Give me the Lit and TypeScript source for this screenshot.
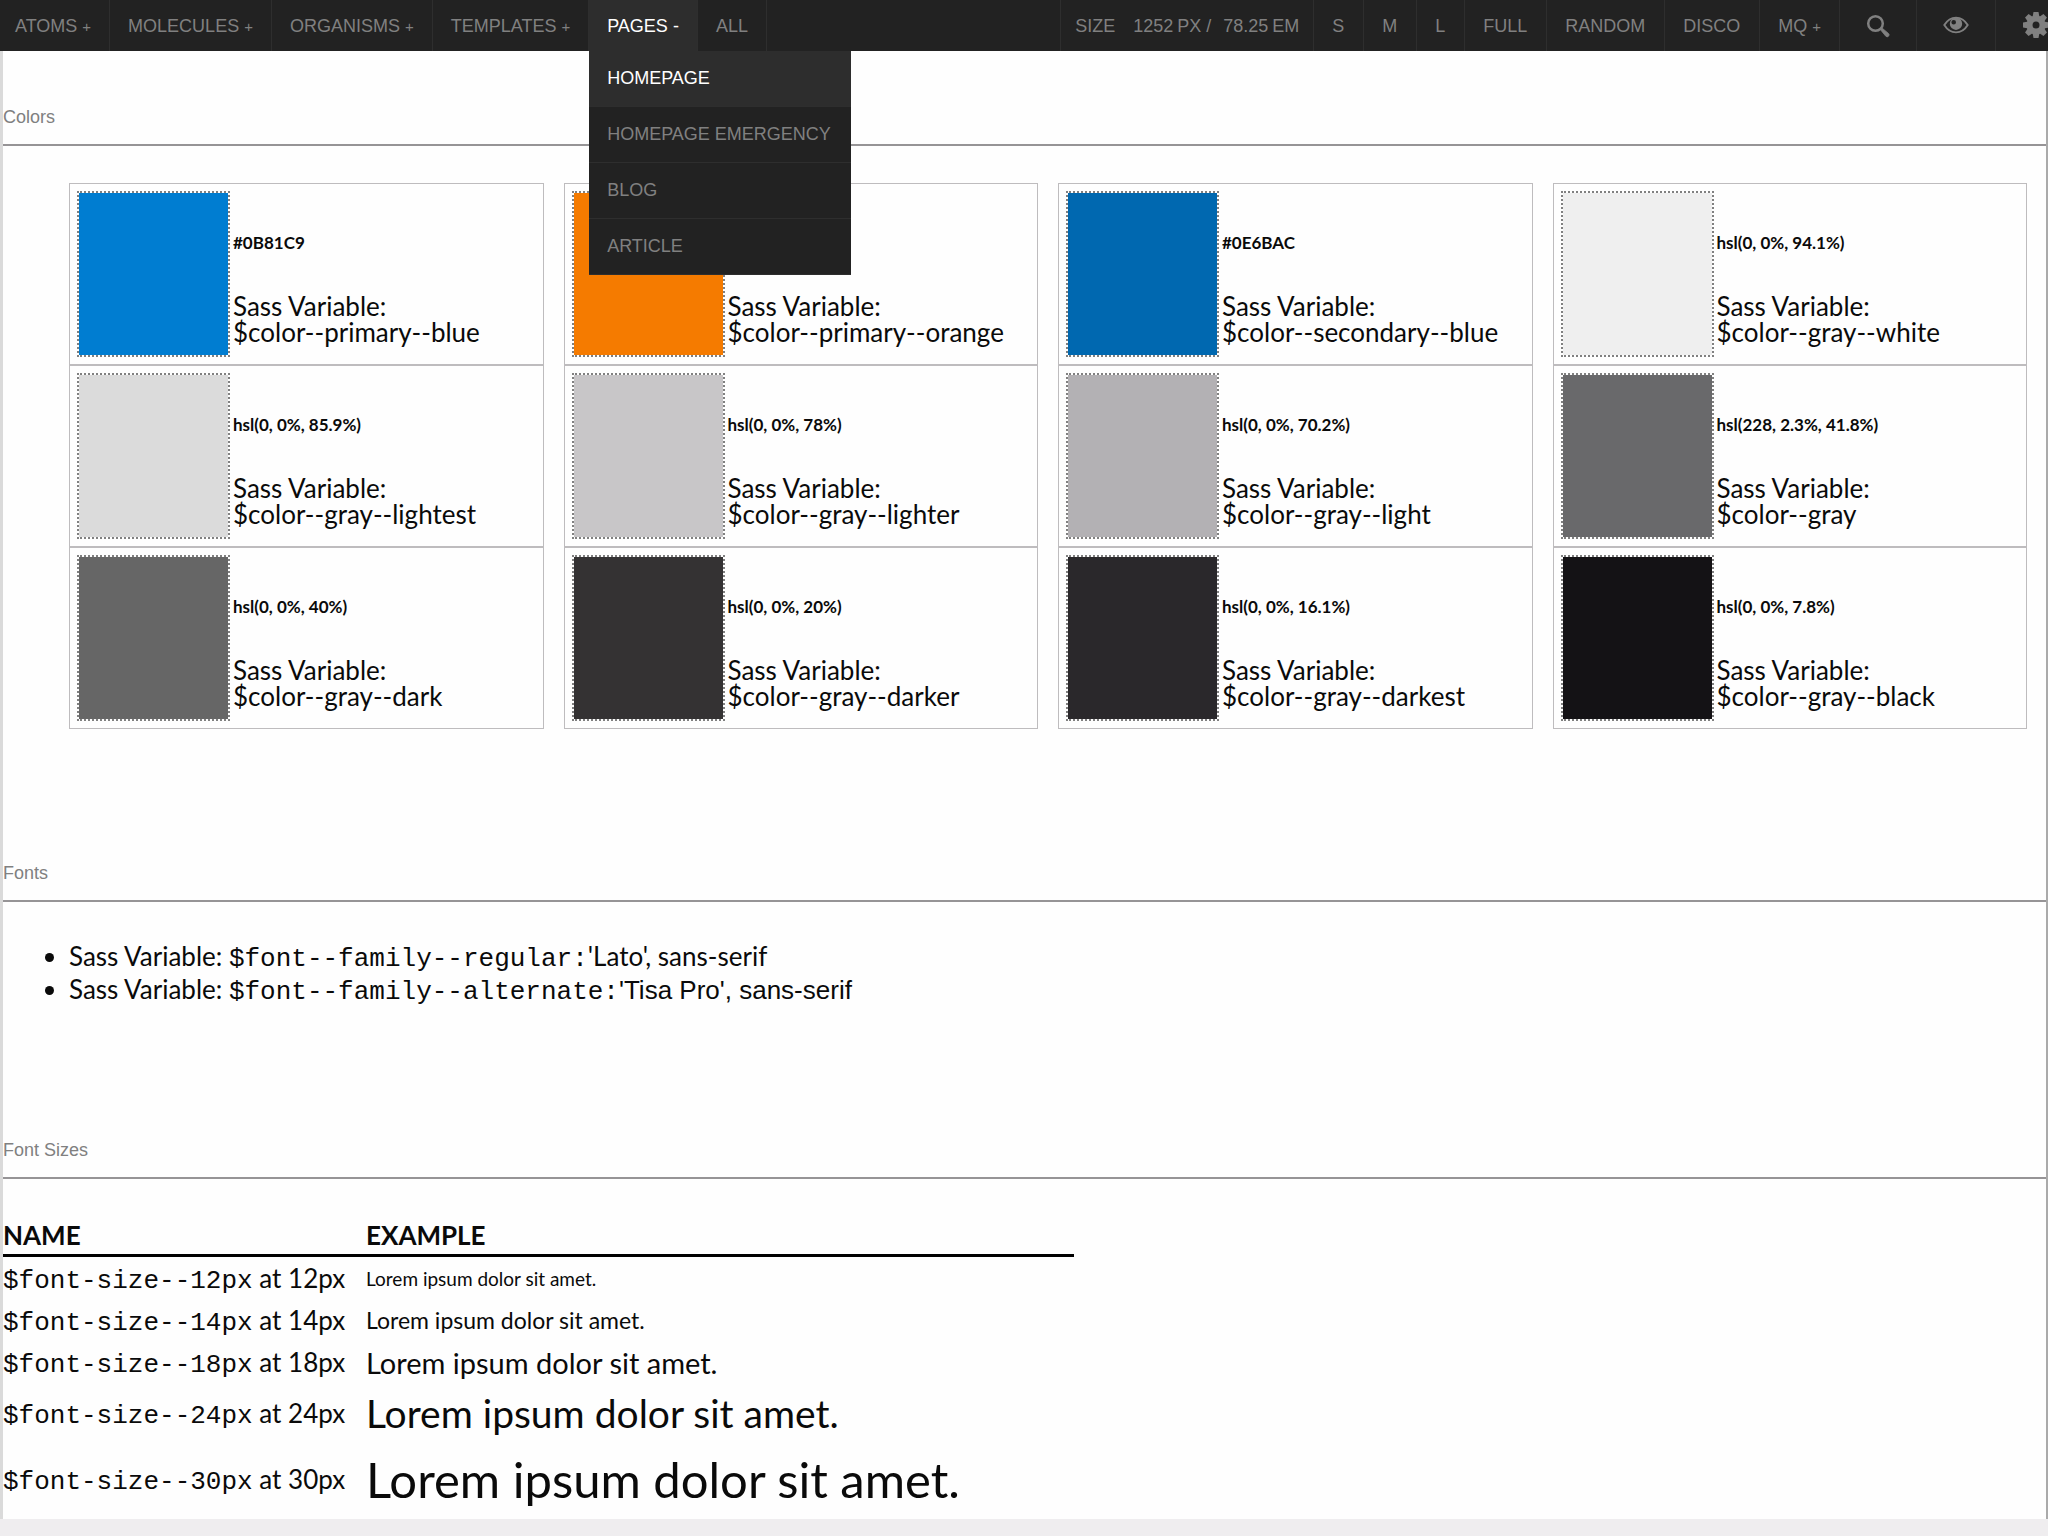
import { LitElement, html, css, svg } from "lit";
import { customElement } from "lit/decorators.js";
import { styleMap } from "lit/directives/style-map.js";

interface Swatch { fill: string; value: string; name: string; }

const swatches: Swatch[] = [
  { fill: "#007dd1", value: "#0B81C9", name: "$color--primary--blue" },
  { fill: "#f57b00", value: "#F47B20", name: "$color--primary--orange" },
  { fill: "#0068b0", value: "#0E6BAC", name: "$color--secondary--blue" },
  { fill: "#efefef", value: "hsl(0, 0%, 94.1%)", name: "$color--gray--white" },
  { fill: "#dbdbdb", value: "hsl(0, 0%, 85.9%)", name: "$color--gray--lightest" },
  { fill: "#c8c6c8", value: "hsl(0, 0%, 78%)", name: "$color--gray--lighter" },
  { fill: "#b3b1b4", value: "hsl(0, 0%, 70.2%)", name: "$color--gray--light" },
  { fill: "#69696b", value: "hsl(228, 2.3%, 41.8%)", name: "$color--gray" },
  { fill: "#666666", value: "hsl(0, 0%, 40%)", name: "$color--gray--dark" },
  { fill: "#343233", value: "hsl(0, 0%, 20%)", name: "$color--gray--darker" },
  { fill: "#2a282b", value: "hsl(0, 0%, 16.1%)", name: "$color--gray--darkest" },
  { fill: "#141215", value: "hsl(0, 0%, 7.8%)", name: "$color--gray--black" },
];

const sizes = [12, 14, 18, 24, 30];

const teeth = [0, 45, 90, 135, 180, 225, 270, 315];

@customElement("pattern-nav")
export class PatternNav extends LitElement {
  static styles = css`
    :host {
      display: block;
      position: relative;
      z-index: 2;
      background: #222;
      color: #808080;
      font: 18px/24px "Liberation Sans", Arial, sans-serif;
      text-transform: uppercase;
    }
    .bar { display: flex; justify-content: space-between; height: 51px; }
    .group { display: flex; margin: 0; padding: 0; list-style: none; }
    .item { display: flex; position: relative; border-right: 1px solid #2e2e2e; }
    .tools { border-left: 1px solid #2e2e2e; }
    .control {
      display: flex;
      align-items: center;
      gap: 5px;
      padding: 0 18px;
      border: 0;
      background: none;
      color: inherit;
      font: inherit;
      text-transform: inherit;
      text-decoration: none;
      white-space: nowrap;
      cursor: pointer;
    }
    .first .control { padding-left: 15px; }
    .plain { padding-right: 19px; }
    .sign { font-size: 15px; padding-top: 3px; }
    .open { background: #2d2d2d; color: #fff; }
    .open .sign { font-size: 18px; padding-top: 0; }
    .menu {
      position: absolute;
      top: 100%;
      left: 0;
      margin: 0;
      padding: 0;
      list-style: none;
      background: #222;
      color: #808080;
    }
    .entry { border-bottom: 1px solid #2e2e2e; }
    .link {
      display: block;
      padding: 15px 20px 16px 18px;
      color: inherit;
      text-decoration: none;
      white-space: nowrap;
    }
    .current { background: #2d2d2d; color: #fff; }
    .size { display: flex; align-items: center; padding: 0 14px; }
    .legend { margin-right: 18px; }
    .field { display: flex; align-items: center; gap: 3px; }
    .slash { margin: 0 12px 0 5px; }
    .number {
      width: 41px;
      padding: 0;
      border: 0;
      background: none;
      color: inherit;
      font: inherit;
      outline: none;
    }
    .wide { width: 46px; }
    .icon { display: block; flex: none; width: 26px; height: 26px; fill: currentColor; }
    .search { padding: 0 25px 2px; }
    .eye { padding: 0 26px 2px; }
    .gear { padding: 0 0 2px 27px; }
    .last { border-right: 0; width: 52px; overflow: hidden; }
  `;

  private plain(label: string) {
    return html`<li class="item"><button class="control plain">${label}</button></li>`;
  }

  private expandable(label: string, extra = "") {
    return html`<li class="item ${extra}">
      <button class="control" aria-expanded="false">${label}<span class="sign">+</span></button>
    </li>`;
  }

  render() {
    return html`
      <nav class="bar">
        <ul class="group">
          ${this.expandable("Atoms", "first")}
          ${["Molecules", "Organisms", "Templates"].map((l) => this.expandable(l))}
          <li class="item open">
            <button class="control" aria-expanded="true">Pages<span class="sign">-</span></button>
            <ul class="menu">
              ${["Homepage", "Homepage Emergency", "Blog", "Article"].map(
                (l, i) => html`<li class="entry ${i === 0 ? "current" : ""}"><a class="link" href="#">${l}</a></li>`,
              )}
            </ul>
          </li>
          <li class="item"><a class="control" href="#">All</a></li>
        </ul>
        <ul class="group tools">
          <li class="item size">
            <span class="legend">Size</span>
            <label class="field"><input class="number" value="1252" />px</label>
            <span class="slash">/</span>
            <label class="field"><input class="number wide" value="78.25" />em</label>
          </li>
          ${["S", "M", "L", "Full", "Random", "Disco"].map((l) => this.plain(l))}
          ${this.expandable("MQ")}
          <li class="item">
            <button class="control search" aria-label="Search">
              <svg class="icon" viewBox="0 0 26 26">
                <circle cx="10.500" cy="11.500" r="7.300" fill="none" stroke="currentColor" stroke-width="2.500" />
                <path d="M15.300 17.500l1.600-1.600 6.600 5.600a1.900 1.900 0 0 1-2.700 2.700z" stroke="currentColor" stroke-width=".8" />
              </svg>
            </button>
          </li>
          <li class="item">
            <button class="control eye" aria-label="View">
              <svg class="icon" viewBox="0 0 26 26">
                <path d="M1.300 13C4.500 7.800 8.500 5.600 13 5.600S21.500 7.800 24.700 13C21.500 18.200 17.500 20.400 13 20.400S4.500 18.200 1.300 13z" fill="none" stroke="currentColor" stroke-width="1.900" />
                <path fill-rule="evenodd" d="M13 5.500a6.200 6.200 0 1 1 0 12.400a6.200 6.200 0 0 1 0-12.400zM10.700 8a2.300 2.300 0 1 0 0 4.600a2.300 2.300 0 0 0 0-4.600z" />
              </svg>
            </button>
          </li>
          <li class="item last">
            <button class="control gear" aria-label="Settings">
              <svg class="icon" viewBox="0 0 26 26">
                ${teeth.map((a) => svg`<path d="M10.500 0h5l1 5.500h-7z" transform="rotate(${a} 13 13)" />`)}
                <path fill-rule="evenodd" d="M13 3.500a9.500 9.500 0 1 1 0 19a9.500 9.500 0 0 1 0-19zM13 9.500a3.500 3.500 0 1 0 0 7a3.500 3.500 0 0 0 0-7z" />
              </svg>
            </button>
          </li>
        </ul>
      </nav>
    `;
  }
}

@customElement("app-root")
export class AppRoot extends LitElement {
  static styles = css`
    :host {
      display: block;
      min-height: 100vh;
      background: #efedef;
      color: #0a0a0a;
      font: 26px/33px Lato, sans-serif;
    }
    .page {
      padding-bottom: 4px;
      border-left: 3px solid #dadada;
      border-right: 2px solid #aaa;
      background: #fefefe;
    }
    .section { display: flow-root; }
    .heading {
      margin: 0;
      padding-bottom: 15px;
      border-bottom: 2px solid #969496;
      color: #808080;
      font: 18px/24px "Liberation Sans", Arial, sans-serif;
    }
    .colors { padding-top: 54px; }
    .fonts { padding-top: 132px; }
    .scale { padding-top: 132px; }
    .grid {
      display: grid;
      grid-template-columns: repeat(4, 1fr);
      column-gap: 20px;
      margin: 0;
      padding: 37px 19px 0 66px;
      list-style: none;
    }
    .card {
      display: flex;
      gap: 3px;
      box-sizing: border-box;
      height: 182px;
      padding: 7px;
      border: 1px solid #bebcbe;
    }
    .chip {
      flex: none;
      box-sizing: border-box;
      width: 153px;
      border: 2px dotted #808080;
      background-clip: padding-box;
    }
    .info { display: flex; flex-direction: column; justify-content: space-between; padding: 40px 0 12px; }
    .value { margin: 0; font-size: 17px; line-height: 24px; font-weight: 700; }
    .variable { margin: 0; line-height: 26px; }
    .list { margin: 0; padding: 38px 0 0 66px; }
    .mono { font-family: "Liberation Mono", "Courier New", monospace; line-height: 1; }
    .alternate { font-family: "Liberation Sans", Arial, sans-serif; line-height: 1; }
    .table { width: 1071px; max-width: 100%; margin-top: 37px; border-collapse: collapse; }
    .head { padding: 3px 0 2px; border-bottom: 3px solid #000; text-align: left; text-transform: uppercase; }
    .name { width: 363px; }
    .cell { height: 42px; padding: 0; vertical-align: middle; white-space: nowrap; }
    .s12 { font-size: 19px; }
    .s14 { font-size: 23px; }
    .s18 { font-size: 29px; }
    .s24 { height: 60px; font-size: 39px; }
    .s30 { height: 72px; font-size: 49px; }
  `;

  render() {
    return html`
      <pattern-nav></pattern-nav>
      <main class="page">
        <section class="section colors">
          <h2 class="heading">Colors</h2>
          <ul class="grid">
            ${swatches.map(
              (s) => html`<li class="card">
                <div class="chip" style=${styleMap({ backgroundColor: s.fill })}></div>
                <div class="info">
                  <p class="value">${s.value}</p>
                  <p class="variable">Sass Variable:<br />${s.name}</p>
                </div>
              </li>`,
            )}
          </ul>
        </section>
        <section class="section fonts">
          <h2 class="heading">Fonts</h2>
          <ul class="list">
            <li>Sass Variable: <span class="mono">$font--family--regular:</span>'Lato', sans-serif</li>
            <li>Sass Variable: <span class="mono">$font--family--alternate:</span><span class="alternate">'Tisa Pro', sans-serif</span></li>
          </ul>
        </section>
        <section class="section scale">
          <h2 class="heading">Font Sizes</h2>
          <table class="table">
            <thead>
              <tr><th class="head name">Name</th><th class="head">Example</th></tr>
            </thead>
            <tbody>
              ${sizes.map(
                (n) => html`<tr>
                  <td class="cell"><span class="mono">$font-size--${n}px</span> at ${n}px</td>
                  <td class="cell s${n}">Lorem ipsum dolor sit amet.</td>
                </tr>`,
              )}
            </tbody>
          </table>
        </section>
      </main>
    `;
  }
}
